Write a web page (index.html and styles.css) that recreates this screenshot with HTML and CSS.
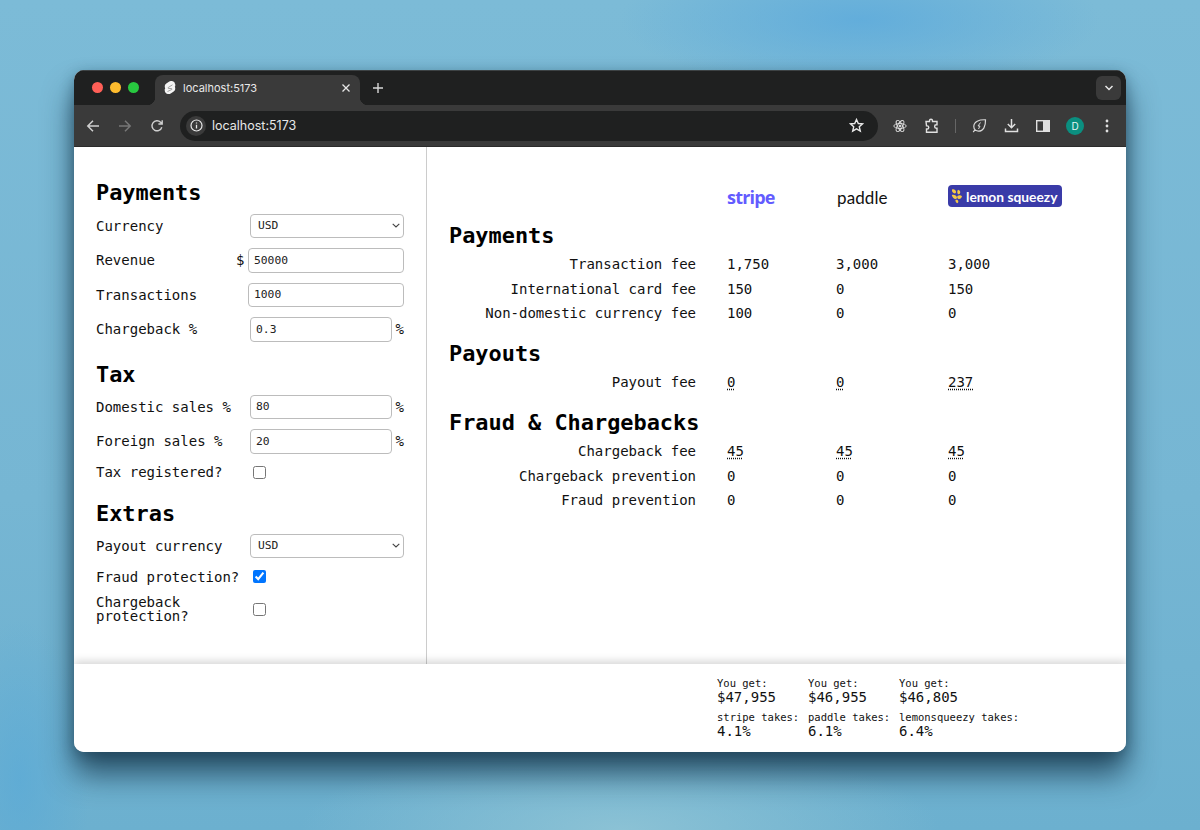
FILE: index.html
```html
<!DOCTYPE html>
<html lang="en">
<head>
    <meta charset="UTF-8">
    <meta name="viewport" content="width=device-width, initial-scale=1.0">
    <title>localhost:5173</title>
    <link rel="stylesheet" href="styles.css">
</head>
<body>
    <div class="window">
        <div class="tabstrip">
            <div class="lights">
                <span class="light light-red"></span>
                <span class="light light-yellow"></span>
                <span class="light light-green"></span>
            </div>
            <div class="tab">
                <svg class="favicon" width="12" height="14" viewBox="0 0 12 14">
                    <path d="M10.6 1.6C9.4-.1 7-.5 5.300.5L2.300 2.500C1.500 3 .9 3.900.8 4.900c-.1.800 0 1.600.4 2.300-.3.400-.5.900-.5 1.400-.1 1 .1 2 .7 2.800 1.200 1.700 3.600 2.100 5.300 1.100l3-2c.8-.5 1.400-1.400 1.500-2.400.1-.8 0-1.600-.4-2.300.3-.4.500-.9.500-1.400.1-1-.1-1.700-.7-2.400z" fill="#f4f4f4"/>
                    <path d="M8.500 3.800 4.200 6.500c-.6.500-.1 1 .6 1l2.400 0c.7 0 1.200.6.600 1L3.500 10.500" fill="none" stroke="#8a8a8a" stroke-width=".8"/>
                </svg>
                <span class="tab-title">localhost:5173</span>
                <svg class="tab-close" width="10" height="10" viewBox="0 0 10 10">
                    <path d="M1.500 1.500l7 7M8.500 1.500l-7 7" stroke="#e8e8e8" stroke-width="1.300" fill="none"/>
                </svg>
            </div>
            <svg class="new-tab" width="12" height="12" viewBox="0 0 12 12">
                <path d="M6 1v10M1 6h10" stroke="#d8d8d8" stroke-width="1.400" fill="none"/>
            </svg>
            <div class="tab-menu">
                <svg width="10" height="6" viewBox="0 0 10 6">
                    <path d="M1.500 1l3.500 3.500L8.500 1" stroke="#e8e8e8" stroke-width="1.500" fill="none"/>
                </svg>
            </div>
        </div>

        <div class="toolbar">
            <span class="tool">
                <svg width="14" height="14" viewBox="0 0 14 14"><path d="M13 7H2M7 1.800 1.800 7 7 12.200" stroke="#cfcfcf" stroke-width="1.500" fill="none"/></svg>
            </span>
            <span class="tool">
                <svg width="14" height="14" viewBox="0 0 14 14"><path d="M1 7h11M7 1.800 12.200 7 7 12.200" stroke="#777" stroke-width="1.500" fill="none"/></svg>
            </span>
            <span class="tool">
                <svg width="14" height="14" viewBox="0 0 14 14"><path d="M11.800 8.200A5 5 0 1 1 10.600 3.300L12 4.700M12.200 1.200v3.800H8.400" stroke="#cfcfcf" stroke-width="1.400" fill="none"/></svg>
            </span>
            <div class="address">
                <span class="site-info">
                    <svg width="13" height="13" viewBox="0 0 13 13"><circle cx="6.500" cy="6.500" r="5.500" stroke="#e8e8e8" stroke-width="1.200" fill="none"/><path d="M6.500 5.800v3.600M6.500 3.400v1.200" stroke="#e8e8e8" stroke-width="1.300"/></svg>
                </span>
                <span class="url">localhost:5173</span>
                <svg class="star" width="15" height="15" viewBox="0 0 15 15"><path d="M7.500 1.500l1.800 4 4.300.4-3.300 2.900 1 4.300-3.800-2.300-3.800 2.300 1-4.300L1.400 5.900l4.300-.4z" stroke="#e8e8e8" stroke-width="1.400" fill="none"/></svg>
            </div>
            <span class="tool">
                <svg width="14" height="14" viewBox="0 0 14 14" fill="none" stroke="#e0e0e0" stroke-width=".9"><ellipse cx="7" cy="7" rx="6.200" ry="2.500"/><ellipse cx="7" cy="7" rx="6.200" ry="2.500" transform="rotate(60 7 7)"/><ellipse cx="7" cy="7" rx="6.200" ry="2.500" transform="rotate(120 7 7)"/><circle cx="7" cy="7" r="1" fill="#e0e0e0"/></svg>
            </span>
            <span class="tool">
                <svg width="16" height="16" viewBox="0 0 16 16"><path d="M2 3.500h3.500V2.800a1.500 1.500 0 0 1 3 0v.7H13v3.300h-.7v0a1.700 1.700 0 0 0 0 3.400h.7v4H2.500v-3.200h.7a1.500 1.500 0 0 0 0-3.100h-.7z" stroke="#e0e0e0" stroke-width="1.400" fill="none"/></svg>
            </span>
            <span class="separator"></span>
            <span class="tool">
                <svg width="15" height="15" viewBox="0 0 15 15" fill="none" stroke="#d8d8d8" stroke-width="1.200"><path d="M13.500 1.800C7 1.500 1.800 3.500 1.800 8.500c0 2.800 2.200 4.700 4.700 4.700 5 0 7.200-5 7-11.400zM1.200 14l2-2.300"/><path d="M8.500 4.500 6 8h2l-1.500 3" stroke-width="1"/></svg>
            </span>
            <span class="tool">
                <svg width="15" height="15" viewBox="0 0 15 15" fill="none" stroke="#e0e0e0" stroke-width="1.500"><path d="M7.500 1v8.500M3.800 6l3.700 3.700L11.200 6M1.500 10.500v3h12v-3"/></svg>
            </span>
            <span class="tool">
                <svg width="14" height="12" viewBox="0 0 14 12"><rect x=".7" y=".7" width="12.600" height="10.600" stroke="#e0e0e0" stroke-width="1.400" fill="none"/><rect x="7" y="1" width="6" height="10" fill="#e0e0e0"/></svg>
            </span>
            <span class="tool"><span class="avatar">D</span></span>
            <span class="tool">
                <svg width="4" height="14" viewBox="0 0 4 14"><circle cx="2" cy="2" r="1.400" fill="#e0e0e0"/><circle cx="2" cy="7" r="1.400" fill="#e0e0e0"/><circle cx="2" cy="12" r="1.400" fill="#e0e0e0"/></svg>
            </span>
        </div>

        <div class="page">
            <div class="content">
                <div class="sidebar">
                    <h2 class="first">Payments</h2>
                    <div class="field">
                        <label>Currency</label>
                        <select class="ctl-select"><option>USD</option></select>
                    </div>
                    <div class="field">
                        <label>Revenue</label>
                        <span class="unit-wrap">
                            <span class="unit">$</span>
                            <input class="ctl-wide" type="text" value="50000">
                        </span>
                    </div>
                    <div class="field">
                        <label>Transactions</label>
                        <input class="ctl-wide" type="text" value="1000">
                    </div>
                    <div class="field">
                        <label>Chargeback %</label>
                        <span class="unit-wrap">
                            <input class="ctl-unit" type="text" value="0.3">
                            <span class="unit">%</span>
                        </span>
                    </div>

                    <h2 class="next">Tax</h2>
                    <div class="field">
                        <label>Domestic sales %</label>
                        <span class="unit-wrap">
                            <input class="ctl-unit" type="text" value="80">
                            <span class="unit">%</span>
                        </span>
                    </div>
                    <div class="field">
                        <label>Foreign sales %</label>
                        <span class="unit-wrap">
                            <input class="ctl-unit" type="text" value="20">
                            <span class="unit">%</span>
                        </span>
                    </div>
                    <div class="field check">
                        <label>Tax registered?</label>
                        <input type="checkbox">
                    </div>

                    <h2 class="next">Extras</h2>
                    <div class="field">
                        <label>Payout currency</label>
                        <select class="ctl-select"><option>USD</option></select>
                    </div>
                    <div class="field check">
                        <label>Fraud protection?</label>
                        <input type="checkbox" checked>
                    </div>
                    <div class="field check">
                        <label>Chargeback<br>protection?</label>
                        <input type="checkbox">
                    </div>
                </div>

                <div class="main">
                    <div class="fees">
                        <div class="logo-spacer"></div>
                        <div class="logo-cell"><span class="logo-stripe">stripe</span></div>
                        <div class="logo-cell"><span class="logo-paddle">paddle</span></div>
                        <div class="logo-cell">
                            <span class="logo-lemon">
                                <svg width="12" height="16" viewBox="0 0 12 16">
                                    <path d="M1 1.500c2-.8 3.500.2 4 2C5.500 5 4 6 2.500 5 1.200 4.200.8 2.800 1 1.500zM.8 7c2-.8 3.800 0 4.800 1.500.8 1.300.3 2.500-1.200 2.500C2.800 11 1.200 9 .8 7zM7 1.800c1.500.3 2.500 1.500 2.200 3-.2 1.200-1.200 1.800-2.200 1.200C6 5.200 6 3 7 1.800zM6.500 8c1.500-1 3.500-.8 4.500.3-.3 1.700-1.800 3-3.300 2.700C6.300 10.700 5.800 9 6.500 8zM4.500 12c1.200-.5 2.400 0 2.800 1.200.2.800-.3 1.800-1.300 2-1-.6-1.800-2-1.500-3.200z" fill="#f6c945"/>
                                </svg>
                                lemon squeezy
                            </span>
                        </div>

                        <h2 class="fee-title">Payments</h2>
                        <div class="fee-label">Transaction fee</div>
                        <div class="fee-value">1,750</div>
                        <div class="fee-value">3,000</div>
                        <div class="fee-value">3,000</div>
                        <div class="fee-label">International card fee</div>
                        <div class="fee-value">150</div>
                        <div class="fee-value">0</div>
                        <div class="fee-value">150</div>
                        <div class="fee-label">Non-domestic currency fee</div>
                        <div class="fee-value">100</div>
                        <div class="fee-value">0</div>
                        <div class="fee-value">0</div>

                        <h2 class="fee-title next">Payouts</h2>
                        <div class="fee-label">Payout fee</div>
                        <div class="fee-value"><span class="hint">0</span></div>
                        <div class="fee-value"><span class="hint">0</span></div>
                        <div class="fee-value"><span class="hint">237</span></div>

                        <h2 class="fee-title next">Fraud &amp; Chargebacks</h2>
                        <div class="fee-label">Chargeback fee</div>
                        <div class="fee-value"><span class="hint">45</span></div>
                        <div class="fee-value"><span class="hint">45</span></div>
                        <div class="fee-value"><span class="hint">45</span></div>
                        <div class="fee-label">Chargeback prevention</div>
                        <div class="fee-value">0</div>
                        <div class="fee-value">0</div>
                        <div class="fee-value">0</div>
                        <div class="fee-label">Fraud prevention</div>
                        <div class="fee-value">0</div>
                        <div class="fee-value">0</div>
                        <div class="fee-value">0</div>
                    </div>
                </div>
            </div>

            <div class="totals">
                <div class="total">
                    <div class="total-label">You get:</div>
                    <div class="total-value">$47,955</div>
                    <div class="total-label takes">stripe takes:</div>
                    <div class="total-value">4.1%</div>
                </div>
                <div class="total">
                    <div class="total-label">You get:</div>
                    <div class="total-value">$46,955</div>
                    <div class="total-label takes">paddle takes:</div>
                    <div class="total-value">6.1%</div>
                </div>
                <div class="total">
                    <div class="total-label">You get:</div>
                    <div class="total-value">$46,805</div>
                    <div class="total-label takes">lemonsqueezy takes:</div>
                    <div class="total-value">6.4%</div>
                </div>
            </div>
        </div>
    </div>
</body>
</html>
```

FILE: styles.css
```css
:root {
    --chrome-dark: #1f2020;
    --chrome-mid: #3a3a3a;
    --text-color: #111;
    --input-border: #bcbcbc;
}

html, body {
    height: 100%;
}

body {
    margin: 0;
    box-sizing: border-box;
    padding: 70px 74px 0;
    overflow: hidden;
    color: var(--text-color);
    font-family: 'DejaVu Sans Mono', 'Liberation Mono', monospace;
    font-size: 14px;
    background:
        radial-gradient(ellipse 240px 70px at 860px 20px, rgba(92, 170, 220, 0.8), transparent),
        radial-gradient(ellipse 320px 90px at 620px 830px, rgba(150, 200, 215, 0.75), transparent),
        radial-gradient(ellipse 70px 160px at 20px 780px, rgba(90, 170, 215, 0.7), transparent),
        linear-gradient(180deg, #7cbbd7 0%, #76b6d3 60%, #6cb0cf 100%);
}

.window {
    width: 1052px;
    height: 682px;
    border-radius: 10px;
    overflow: hidden;
    display: flex;
    flex-direction: column;
    background: white;
    box-shadow: 0 22px 30px rgba(15, 45, 65, 0.72), 0 4px 14px rgba(20, 50, 70, 0.4);
}

/* browser chrome */
.tabstrip {
    height: 35px;
    flex: none;
    display: flex;
    align-items: flex-end;
    background: var(--chrome-dark);
    border-top: 1px solid #3d4244;
    box-sizing: border-box;
}

.lights {
    display: flex;
    gap: 7px;
    padding: 0 0 12px 18px;
    width: 81px;
    box-sizing: border-box;
    align-self: flex-end;
}

.light {
    width: 11px;
    height: 11px;
    border-radius: 50%;
}

.light-red { background: #ff5f57; }
.light-yellow { background: #febc2e; }
.light-green { background: #28c840; }

.tab {
    position: relative;
    width: 205px;
    height: 30px;
    box-sizing: border-box;
    padding: 0 9px 4px;
    display: flex;
    align-items: center;
    background: var(--chrome-mid);
    border-radius: 8px 8px 0 0;
    color: #e8e8e8;
    font-family: Inter, Roboto, sans-serif;
    font-size: 11px;
}

.tab::before,
.tab::after {
    content: "";
    position: absolute;
    bottom: 0;
    width: 8px;
    height: 8px;
}

.tab::before {
    left: -8px;
    background: radial-gradient(circle at 0 0, transparent 8px, var(--chrome-mid) 8.5px);
}

.tab::after {
    right: -8px;
    background: radial-gradient(circle at 100% 0, transparent 8px, var(--chrome-mid) 8.5px);
}

.tab-title {
    margin-left: 7px;
    flex: 1;
}

.new-tab {
    margin: 0 0 11px 12px;
}

.tab-menu {
    margin: 0 5px 5px auto;
    width: 25px;
    height: 24px;
    border-radius: 6px;
    background: var(--chrome-mid);
    display: flex;
    align-items: center;
    justify-content: center;
}

.toolbar {
    height: 41px;
    flex: none;
    display: flex;
    align-items: center;
    padding: 0 3px;
    background: var(--chrome-mid);
    border-bottom: 1px solid #2b2b2b;
}

.tool {
    width: 32px;
    height: 30px;
    flex: none;
    display: flex;
    align-items: center;
    justify-content: center;
}

.address {
    flex: 1;
    height: 30px;
    margin: 0 6px 0 7px;
    padding: 0 14px 0 6px;
    display: flex;
    align-items: center;
    border-radius: 15px;
    background: var(--chrome-dark);
    color: #e8e8e8;
    font-family: Inter, Roboto, sans-serif;
    font-size: 12.500px;
}

.site-info {
    width: 20px;
    height: 20px;
    border-radius: 50%;
    background: #3a3a3a;
    display: flex;
    align-items: center;
    justify-content: center;
}

.url {
    margin-left: 6px;
    flex: 1;
}

.separator {
    width: 15px;
    height: 14px;
    flex: none;
    background: linear-gradient(#666, #666) center / 1px 100% no-repeat;
}

.avatar {
    width: 18px;
    height: 18px;
    border-radius: 50%;
    background: #0b8f80;
    color: #e8f5f3;
    font-family: Inter, Roboto, sans-serif;
    font-size: 10px;
    display: flex;
    align-items: center;
    justify-content: center;
}

/* the app itself */
.page {
    flex: 1;
    min-height: 0;
    display: flex;
    flex-direction: column;
}

.content {
    flex: 1;
    min-height: 0;
    display: flex;
}

.sidebar {
    width: 353px;
    flex: none;
    box-sizing: border-box;
    padding: 32px 22px 0;
    border-right: 1px solid #ccc;
    display: flex;
    flex-direction: column;
    gap: 10px;
}

h2 {
    margin: 0;
    font-size: 21.900px;
    font-weight: 700;
    line-height: 28px;
    color: #000;
}

.sidebar h2 {
    margin-bottom: -4px;
}

.sidebar h2.first {
    margin-bottom: -3.300px;
}

.sidebar h2.next {
    margin-top: 9px;
}

.field {
    display: flex;
    align-items: center;
    justify-content: space-between;
    min-height: 24.500px;
}

.field label {
    line-height: 14px;
}

.field.check {
    min-height: 17px;
    justify-content: flex-start;
}

.field.check label {
    width: 157px;
}

.field.check input {
    margin: 0;
    width: 13px;
    height: 13px;
}

.unit-wrap {
    display: flex;
    align-items: center;
    gap: 3.500px;
}

input[type="text"],
select {
    box-sizing: border-box;
    height: 24.500px;
    margin: 0;
    background-color: white;
    color: #222;
    border: 1px solid var(--input-border);
    border-radius: 4px;
    font-family: 'DejaVu Sans Mono', 'Liberation Mono', monospace;
    font-size: 11.300px;
}

input[type="text"] {
    padding: 0 5px;
}

/* thin chevron instead of the heavy native arrow */
.ctl-select {
    width: 154px;
    padding: 0 7px;
    appearance: none;
    background-image: url("data:image/svg+xml,%3Csvg xmlns='http://www.w3.org/2000/svg' width='8' height='5'%3E%3Cpath d='M.7.8 4 4 7.300.8' fill='none' stroke='%23444' stroke-width='1.100'/%3E%3C/svg%3E");
    background-repeat: no-repeat;
    background-position: right 3px center;
}

.ctl-wide {
    width: 156px;
}

.ctl-unit {
    width: 142px;
}

.main {
    flex: 1;
    padding: 37px 0 0 22px;
}

.fees {
    display: grid;
    grid-template-columns: 247px 109px 112px 145px;
    align-items: center;
}

.logo-spacer {
    height: 24px;
}

.logo-cell {
    display: flex;
    align-items: center;
    height: 24px;
    margin-left: 31px;
}

.fee-title {
    grid-column: 1 / -1;
    margin-top: 14px;
    height: 30px;
}

.fee-title.next {
    margin-top: 14.300px;
}

.fee-label {
    text-align: right;
    line-height: 24.600px;
    white-space: nowrap;
}

.fee-value {
    line-height: 24.600px;
    margin-left: 31px;
    white-space: nowrap;
}

.hint {
    text-decoration: underline dotted;
    text-underline-offset: 2px;
}

.logo-stripe {
    padding-top: 2px;
    color: #635bff;
    font-family: 'Open Sans', sans-serif;
    font-weight: 700;
    font-size: 18px;
    letter-spacing: -0.8px;
}

.logo-paddle {
    padding: 2px 0 0 1px;
    color: #111;
    font-family: Lato, sans-serif;
    font-weight: 400;
    font-size: 17px;
    letter-spacing: 0.1px;
}

.logo-lemon {
    display: flex;
    flex: none;
    align-items: center;
    gap: 3px;
    width: 114px;
    height: 22px;
    box-sizing: border-box;
    padding: 0 3px;
    border-radius: 4px;
    background: #3a3ba8;
    color: white;
    font-family: Lato, sans-serif;
    font-weight: 700;
    font-size: 13.800px;
    white-space: nowrap;
}

.totals {
    flex: none;
    height: 88px;
    box-sizing: border-box;
    padding: 13px 0 0 643px;
    display: flex;
    position: relative;
    background: white;
    box-shadow: 0 -3px 8px rgba(0, 0, 0, 0.16);
}

.total {
    width: 91px;
    white-space: nowrap;
}

.total-label {
    font-size: 10.500px;
    line-height: 13px;
}

.total-value {
    font-size: 14px;
    line-height: 15px;
}

.takes {
    margin-top: 6px;
}
```
